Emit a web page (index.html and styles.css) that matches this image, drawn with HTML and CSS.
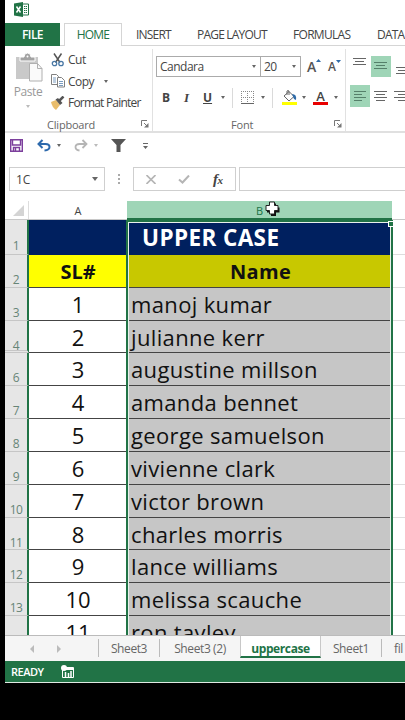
FILE: index.html
```html
<!DOCTYPE html>
<html lang="en">

<head>
    <meta charset="UTF-8">
    <meta name="viewport" content="width=device-width, initial-scale=1.0">
    <title>Excel</title>
    <link rel="stylesheet" href="styles.css">
</head>

<body>
    <div class="app">
        <div class="titlebar">
            <svg class="logo" width="15" height="15" viewBox="0 0 15 15">
                <path d="M8 2h6.500v11H8z" fill="#fff" stroke="#217346" />
                <path d="M10 4.500h3M10 6.500h3M10 8.500h3M10 10.500h3" stroke="#217346" stroke-dasharray="1.300 .5" />
                <path d="M0 1.500L9 0v15L0 13.500z" fill="#217346" />
                <path d="M2.500 4.500l4 6M6.500 4.500l-4 6" stroke="#fff" stroke-width="1.500" />
            </svg>
        </div>
        <div class="tabs">
            <div class="tab file">FILE</div>
            <div class="tab home">HOME</div>
            <div class="tab insert">INSERT</div>
            <div class="tab layout">PAGE LAYOUT</div>
            <div class="tab formulas">FORMULAS</div>
            <div class="tab data">DATA</div>
        </div>
        <div class="ribbon">
            <div class="group clipboard">
                <div class="tools">
                    <div class="paste">
                        <svg width="27" height="29" viewBox="0 0 27 29">
                            <path d="M0 4h22v22H0z" fill="#c9c9c9" />
                            <path d="M4 8V4h4q0-4 3.500-4T15 4h4v4z" fill="#a3a3a3" stroke="#fff" />
                            <circle cx="11.500" cy="3.500" r="1" fill="#fff" />
                            <path d="M13.500 10.500h8l4.500 5v12.500H13.500z" fill="#fafafa" stroke="#b0b0b0" />
                            <path d="M21.500 10.500v5H26" fill="none" stroke="#b0b0b0" />
                        </svg>
                        <span>Paste</span>
                        <i class="arrow pale"></i>
                    </div>
                    <div class="commands">
                        <div class="command">
                            <svg width="14" height="14" viewBox="0 0 14 14" fill="none">
                                <path d="M3 .5l6 9M10.500 .5l-6 9" stroke="#555" stroke-width="1.500" />
                                <circle cx="3.500" cy="10.500" r="2.200" stroke="#4a78a5" stroke-width="1.300" />
                                <circle cx="10" cy="10.500" r="2.200" stroke="#4a78a5" stroke-width="1.300" />
                            </svg>
                            <span>Cut</span>
                        </div>
                        <div class="command">
                            <svg width="14" height="14" viewBox="0 0 14 14" fill="#fff" stroke="#808080">
                                <path d="M.5 .5h5l2 2v8h-7z" />
                                <path d="M2 4h3M2 6h3M2 8h3" stroke="#7a9cc0" />
                                <path d="M6.500 3.500h4l3 3v6.500h-7z" />
                                <path d="M8 7.500h4M8 9.500h4M8 11.500h4" stroke="#7a9cc0" />
                            </svg>
                            <span>Copy</span>
                            <i class="arrow"></i>
                        </div>
                        <div class="command">
                            <svg width="14" height="14" viewBox="0 0 14 14">
                                <path d="M0 6l5-2 4 5-4 5q-4-3-5-8z" fill="#e9bd6c" />
                                <path d="M4.500 3.500L7 2l4.500 5L9 9z" fill="#555" />
                                <path d="M8 5l4.500-4.500" stroke="#555" stroke-width="2.500" />
                            </svg>
                            <span class="painter">Format Painter</span>
                        </div>
                    </div>
                </div>
                <div class="caption"><span class="cap-clip">Clipboard</span>
                    <svg width="8" height="8" viewBox="0 0 8 8" fill="none" stroke="#777">
                        <path d="M.5 6V.5H6M3 3l3 3" />
                        <path d="M7.500 3v4.500H3z" fill="#777" stroke="none" />
                    </svg>
                </div>
            </div>
            <div class="group font">
                <div class="row selects">
                    <div class="select face"><span>Candara</span><i class="arrow"></i></div>
                    <div class="select size"><span>20</span><i class="arrow"></i></div>
                    <span class="grow">A<svg width="5" height="3" viewBox="0 0 5 3"><path d="M0 3L2.500 0 5 3z" fill="#2f6ba8" /></svg></span>
                    <span class="grow shrink">A<svg width="5" height="3" viewBox="0 0 5 3"><path d="M0 0L2.500 3 5 0z" fill="#2f6ba8" /></svg></span>
                </div>
                <div class="row formats">
                    <b class="bold">B</b>
                    <i class="italic">I</i>
                    <b class="underline">U</b>
                    <i class="arrow a-under"></i>
                    <span class="divider d-one"></span>
                    <svg class="borders" width="13" height="13" viewBox="0 0 13 13" stroke="#888">
                        <path d="M0 .5h13M0 6.500h13M.5 0v13M6.500 0v13M12.500 0v13" stroke-dasharray="1 1" />
                        <path d="M0 12.500h13" stroke="#666" />
                    </svg>
                    <i class="arrow a-borders"></i>
                    <span class="divider d-two"></span>
                    <svg class="fill" width="15" height="15" viewBox="0 0 15 15">
                        <path d="M2 6l5-4.500 5 5L7 11z" fill="#fff" stroke="#666" />
                        <path d="M5 5V1q1.500-1 2 0v4" fill="none" stroke="#666" />
                        <path d="M10 4q5 0 4 6l-2-1z" fill="#2f6ba8" />
                        <path d="M0 12h15v3H0z" fill="#ffff00" />
                    </svg>
                    <i class="arrow a-fill"></i>
                    <span class="color">A</span>
                    <i class="arrow a-color"></i>
                </div>
                <div class="caption"><span class="cap-font">Font</span>
                    <svg width="8" height="8" viewBox="0 0 8 8" fill="none" stroke="#777">
                        <path d="M.5 6V.5H6M3 3l3 3" />
                        <path d="M7.500 3v4.500H3z" fill="#777" stroke="none" />
                    </svg>
                </div>
            </div>
            <div class="group align">
                <div class="row valign">
                    <svg width="20" height="21" viewBox="0 0 20 21" stroke="#666"><path d="M3 2.500h13M5 5.500h9M3 8.500h13" /></svg>
                    <svg class="on" width="20" height="21" viewBox="0 0 20 21" stroke="#55806a"><path d="M3 6.500h13M5 9.500h9M3 12.500h13" /></svg>
                    <svg width="20" height="21" viewBox="0 0 20 21" stroke="#666"><path d="M4 11.500h13M6 14.500h9M4 17.500h13" /></svg>
                </div>
                <div class="row halign">
                    <svg class="on" width="20" height="22" viewBox="0 0 20 22" stroke="#55806a"><path d="M4 6.500h12M4 9.500h8M4 12.500h12M4 15.500h8" /></svg>
                    <svg width="20" height="22" viewBox="0 0 20 22" stroke="#666"><path d="M4 6.500h13M6 9.500h9M4 12.500h13M6 15.500h9" /></svg>
                    <svg width="20" height="22" viewBox="0 0 20 22" stroke="#666"><path d="M4 6.500h13M8 9.500h9M4 12.500h13M8 15.500h9" /></svg>
                </div>
            </div>
        </div>
        <div class="quick">
            <svg class="save" width="13" height="13" viewBox="0 0 13 13" fill="none" stroke="#7c3f9c" stroke-width="1.400">
                <path d="M.7 .7h11.600v11.600H.7zM2.500 .7v5.300h8V.7M3.500 12V8.500h6V12M5.500 9v3" />
            </svg>
            <svg class="undo" width="14" height="13" viewBox="0 0 14 13" fill="none" stroke="#2d69ac" stroke-width="2">
                <path d="M5.500 1L1.500 5l4 4M2 5h6.500q4 0 4 3t-5 3.500" />
            </svg>
            <i class="arrow"></i>
            <svg class="redo" width="14" height="13" viewBox="0 0 14 13" fill="none" stroke="#b5b5b5" stroke-width="1.800">
                <path d="M8.500 1l4 4-4 4M12 5H5.500q-4 0-4 3t4 3.500" />
            </svg>
            <i class="arrow pale"></i>
            <svg class="filter" width="15" height="13" viewBox="0 0 15 13"><path d="M0 0h15L9.500 6v7h-4V6z" fill="#555" /></svg>
            <svg class="more" width="5" height="6" viewBox="0 0 5 6"><path d="M0 0h5v1H0zM0 3h5L2.500 6z" fill="#666" /></svg>
        </div>
        <div class="formula">
            <div class="box name"><span>1C</span><i class="arrow"></i></div>
            <div class="dots"><i></i><i></i><i></i></div>
            <div class="box buttons">
                <svg class="cancel" width="10" height="9" viewBox="0 0 10 9" stroke="#b5b5b5" stroke-width="1.600"><path d="M.5 0l9 9M9.500 0l-9 9" /></svg>
                <svg class="accept" width="12" height="9" viewBox="0 0 12 9" fill="none" stroke="#b5b5b5" stroke-width="2"><path d="M1 4.500l3.500 3L11 .5" /></svg>
                <span class="fx">f<small>x</small></span>
            </div>
            <div class="box input"></div>
        </div>
        <div class="sheet">
            <div class="heads">
                <div class="corner"><svg width="11" height="11" viewBox="0 0 11 11"><path d="M11 0v11H0z" fill="#d4d4d4" /></svg></div>
                <div class="head">A</div>
                <div class="head selected">B
                    <svg class="cursor" width="15" height="15" viewBox="0 0 15 15">
                        <path d="M6 2.500h5v4h3.500v5H11V15H6v-3.500H2v-5h4z" fill="#111" />
                        <path d="M4.500 1h5v3.500H13v5H9.500V13h-5V9.500H1v-5h3.500z" fill="#fff" stroke="#222" />
                    </svg>
                </div>
                <div class="head"></div>
            </div>
            <div class="grid">
                <div class="line title"><span class="num">1</span><span class="a"></span><span class="b">UPPER CASE</span><span class="c"></span></div>
                <div class="line header"><span class="num">2</span><span class="a">SL#</span><span class="b">Name</span><span class="c"></span></div>
                <div class="line"><span class="num">3</span><span class="a">1</span><span class="b">manoj kumar</span><span class="c"></span></div>
                <div class="line hidden-after"><span class="num">4</span><span class="a">2</span><span class="b">julianne kerr</span><span class="c"></span></div>
                <div class="line"><span class="num">6</span><span class="a">3</span><span class="b">augustine millson</span><span class="c"></span></div>
                <div class="line"><span class="num">7</span><span class="a">4</span><span class="b">amanda bennet</span><span class="c"></span></div>
                <div class="line"><span class="num">8</span><span class="a">5</span><span class="b">george samuelson</span><span class="c"></span></div>
                <div class="line"><span class="num">9</span><span class="a">6</span><span class="b">vivienne clark</span><span class="c"></span></div>
                <div class="line"><span class="num">10</span><span class="a">7</span><span class="b">victor brown</span><span class="c"></span></div>
                <div class="line"><span class="num">11</span><span class="a">8</span><span class="b">charles morris</span><span class="c"></span></div>
                <div class="line"><span class="num">12</span><span class="a">9</span><span class="b">lance williams</span><span class="c"></span></div>
                <div class="line"><span class="num">13</span><span class="a">10</span><span class="b">melissa scauche</span><span class="c"></span></div>
                <div class="line"><span class="num"></span><span class="a">11</span><span class="b">ron tayley</span><span class="c"></span></div>
                <div class="selection"></div>
            </div>
        </div>
        <div class="sheets">
            <div class="nav">
                <svg width="4" height="8" viewBox="0 0 4 8"><path d="M4 0v8L0 4z" fill="#bbb" /></svg>
                <svg width="4" height="8" viewBox="0 0 4 8"><path d="M0 0v8l4-4z" fill="#bbb" /></svg>
            </div>
            <div class="sheet-tab s3">Sheet3</div>
            <div class="sheet-tab s32">Sheet3 (2)</div>
            <div class="sheet-tab active">uppercase</div>
            <div class="sheet-tab s1">Sheet1</div>
            <div class="sheet-tab last">fil</div>
        </div>
        <div class="status">
            <span>READY</span>
            <svg width="13" height="13" viewBox="0 0 13 13">
                <path d="M1.500 2.500h11v10h-11z" fill="none" stroke="#fff" />
                <path d="M5 3h7v2H5z" fill="#fff" />
                <path d="M4.500 7v5M7.500 8v4M10 6v6" stroke="#fff" stroke-width="1.500" />
                <circle cx="3" cy="3" r="3" fill="#fff" />
            </svg>
        </div>
    </div>
</body>

</html>
```
FILE: styles.css
```css
* {
    box-sizing: border-box;
    padding: 0;
    margin: 0;
}

body {
    width: 405px;
    height: 720px;
    overflow: hidden;
    background-color: #000;
    color: #444;
    font: 12px "Open Sans", "Noto Sans", sans-serif;
}

svg {
    display: block;
    flex: none;
}

.app {
    width: 400px;
    height: 683px;
    margin-left: 5px;
    overflow: hidden;
    background-color: #fff;
    white-space: nowrap;
}

.titlebar {
    height: 23px;
    padding: 2px 0 0 9px;
}

.tabs {
    display: flex;
    height: 23px;
    border-bottom: 1px solid #d5d5d5;
}

.tab {
    flex: none;
    height: 22px;
    line-height: 23px;
    letter-spacing: -0.8px;
}

.file {
    width: 55px;
    height: 23px;
    background-color: #217346;
    color: #fff;
    font-weight: 600;
    letter-spacing: -0.6px;
    text-align: center;
}

.home {
    width: 58px;
    height: 23px;
    margin-left: 4px;
    border: 1px solid #d5d5d5;
    border-bottom: none;
    background-color: #fff;
    color: #217346;
    line-height: 21px;
    text-align: center;
}

.insert {
    width: 61px;
    margin-left: 14px;
}

.layout {
    width: 96px;
}

.formulas {
    width: 84px;
    letter-spacing: -0.7px;
}

/* 功能区 ribbon */
.ribbon {
    display: flex;
    height: 87px;
    border-bottom: 2px solid #e0e0e0;
}

.group {
    display: flex;
    flex-direction: column;
    flex: none;
    height: 82px;
    margin-top: 3px;
    border-right: 1px solid #e1e1e1;
}

.arrow {
    display: block;
    flex: none;
    width: 0;
    height: 0;
    border: 2.5px solid transparent;
    border-top: 3px solid #666;
    border-bottom: none;
}

.pale {
    border-top-color: #bbb;
}

.clipboard {
    width: 148px;
}

.tools {
    display: flex;
    height: 68px;
}

.paste {
    display: flex;
    flex-direction: column;
    align-items: center;
    width: 46px;
    padding-top: 4px;
    color: #999;
}

.paste svg {
    margin-left: 3px;
}

.paste span {
    line-height: 16px;
    margin: 2px 0 5px;
    letter-spacing: -0.4px;
}

.commands {
    display: flex;
    flex-direction: column;
}

.command {
    display: flex;
    align-items: center;
    height: 21.5px;
}

.command span {
    margin-left: 3px;
    letter-spacing: -0.5px;
}

.command .painter {
    letter-spacing: -0.8px;
}

.command .arrow {
    margin-left: 10px;
}

.caption {
    display: flex;
    align-items: center;
    justify-content: space-between;
    height: 14px;
    padding-right: 3px;
    color: #666;
    font-size: 11px;
    letter-spacing: -0.2px;
}

.cap-clip {
    margin-left: 42px;
}

.font {
    width: 193px;
}

.row {
    display: flex;
    align-items: center;
    flex: none;
}

.selects {
    height: 35px;
    padding-left: 3px;
}

.select {
    display: flex;
    align-items: center;
    justify-content: space-between;
    height: 21px;
    border: 1px solid #ababab;
    padding: 0 4px 0 3px;
    letter-spacing: -0.5px;
}

.face {
    width: 105px;
}

.size {
    width: 40px;
    border-left: none;
}

.grow {
    display: flex;
    width: 13px;
    margin-left: 6px;
    color: #555;
    font-size: 14px;
    font-weight: 600;
}

.grow svg {
    margin-top: 2px;
}

.shrink {
    margin-left: 8px;
    font-size: 12px;
}

.formats {
    height: 33px;
    padding: 0 0 6px 9px;
}

.bold {
    width: 8px;
    font-size: 12px;
}

.italic {
    width: 8px;
    margin-left: 14px;
    font: italic bold 13px "Liberation Serif", serif;
}

.underline {
    width: 8px;
    margin-left: 11px;
    text-decoration: underline;
}

.a-under {
    margin-left: 10px;
}

.divider {
    width: 1px;
    height: 20px;
    background-color: #dadada;
}

.d-one {
    margin-left: 7px;
}

.borders {
    margin-left: 8px;
}

.a-borders {
    margin-left: 7px;
}

.d-two {
    margin-left: 7px;
}

.fill {
    margin-left: 9px;
}

.a-fill {
    margin-left: 5px;
}

.color {
    width: 15px;
    height: 15px;
    margin-left: 7px;
    border-bottom: 3px solid #e80000;
    font-size: 13px;
    font-weight: 600;
    line-height: 12px;
    text-align: center;
}

.a-color {
    margin-left: 6px;
}

.cap-font {
    margin-left: 78px;
}

.align {
    width: 62px;
    border: none;
}

.valign {
    height: 35px;
    padding-left: 4px;
    gap: 1px;
}

.halign {
    height: 24px;
    padding-left: 4px;
}

.on {
    background-color: #9fd5b7;
}

/* 快速访问工具栏 */
.quick {
    display: flex;
    align-items: center;
    height: 34px;
    padding: 0 0 9px 5px;
}

.undo {
    margin-left: 14px;
}

.quick .arrow {
    margin-left: 6px;
}

.redo {
    margin-left: 13px;
}

.filter {
    margin-left: 13px;
}

.more {
    margin-left: 17px;
}

.formula {
    display: flex;
    height: 34px;
    padding-left: 4px;
}

.box {
    display: flex;
    align-items: center;
    flex: none;
    height: 24px;
    border: 1px solid #cfcfcf;
}

.name {
    width: 96px;
    justify-content: space-between;
    padding: 0 6px;
}

.name .arrow {
    border-width: 4px 3px 0;
}

.dots {
    display: flex;
    flex: none;
    flex-direction: column;
    align-items: center;
    justify-content: center;
    gap: 2px;
    width: 28px;
    height: 24px;
}

.dots i {
    width: 2px;
    height: 2px;
    background-color: #aaa;
}

.buttons {
    width: 103px;
}

.cancel {
    margin-left: 12px;
}

.accept {
    margin-left: 22px;
}

.fx {
    margin-left: 23px;
    font: italic bold 15px "Liberation Serif", serif;
    letter-spacing: -0.5px;
}

.fx small {
    font-size: 11px;
}

.input {
    width: 170px;
    margin-left: 3px;
}

/* 工作表 */
.sheet {
    height: 434px;
    overflow: hidden;
}

.heads,
.line {
    display: grid;
    grid-template-columns: 24px 98px 265px 13px;
    grid-template-rows: 100%;
}

.heads {
    height: 19px;
    border-bottom: 1px solid #c8c8c8;
}

.corner {
    display: flex;
    align-items: flex-end;
    justify-content: flex-end;
    padding: 0 4px 3px 0;
    border-right: 1px solid #ddd;
}

.head {
    line-height: 19px;
    font-size: 11px;
    text-align: center;
}

.selected {
    position: relative;
    height: 19px;
    background-color: #9fd5b7;
    border-bottom: 2px solid #217346;
    color: #217346;
}

.cursor {
    position: absolute;
    left: 138px;
    top: 0;
}

.grid {
    position: relative;
}

.line {
    height: 32.83px;
    color: #111;
    font-size: 22px;
    line-height: 33px;
}

.num {
    padding-top: 14px;
    background-color: #e6e6e6;
    border-right: 2px solid #217346;
    border-bottom: 1px solid #c6c6c6;
    color: #668577;
    font-size: 12px;
    font-weight: normal;
    line-height: 22px;
    text-align: center;
    letter-spacing: -0.5px;
}

.a {
    border-bottom: 1px solid #444;
    text-align: center;
}

.b {
    padding-left: 4px;
    background-color: #c6c6c6;
    border-bottom: 1px solid #444;
    letter-spacing: 0.35px;
}

.c {
    border-bottom: 1px solid #ddd;
}

.hidden-after .num {
    border-bottom: 3px double #c6c6c6;
}

.title {
    height: 35px;
    font-weight: bold;
    line-height: 36px;
}

.title .num {
    padding-top: 15px;
}

.title .a,
.title .b {
    border-bottom: none;
    background-color: #00205f;
    color: #fff;
}

.title .b {
    padding-left: 15px;
    font-size: 22.5px;
    letter-spacing: 0.4px;
}

.header .a,
.header .b {
    font-size: 20px;
    font-weight: bold;
}

.header .a {
    background-color: #ffff00;
}

.header .b {
    padding: 0 0 0 2px;
    background-color: #c8c800;
    text-align: center;
}

.selection {
    position: absolute;
    left: 121px;
    top: 0;
    width: 267px;
    height: 430px;
    border: 2px solid #217346;
    box-shadow: inset 0 0 0 1px #e8f0eb;
}

.selection::after {
    content: "";
    box-sizing: border-box;
    position: absolute;
    right: -3px;
    top: -1px;
    width: 6px;
    height: 6px;
    border: 1px solid #fff;
    background-color: #217346;
}

/* 底部标签 */
.sheets {
    display: flex;
    height: 26px;
    background-color: #f5f5f5;
    border-top: 1px solid #bbb;
    color: #666;
    line-height: 25px;
    letter-spacing: -0.4px;
}

.nav {
    display: flex;
    align-items: center;
    flex: none;
    gap: 23px;
    width: 93px;
    padding-left: 25px;
}

.sheet-tab {
    flex: none;
    text-align: center;
}

.s3,
.s32 {
    height: 18px;
    margin-top: 3px;
    border-left: 1px solid #bbb;
    line-height: 19px;
}

.s3 {
    width: 61px;
}

.s32 {
    width: 81px;
}

.active {
    width: 81px;
    height: 22px;
    background-color: #fff;
    border: 1px solid #c8c8c8;
    border-top: none;
    border-bottom: 2px solid #217346;
    color: #217346;
    font-weight: bold;
}

.s1 {
    width: 61px;
    height: 18px;
    margin-top: 3px;
    border-right: 1px solid #bbb;
    line-height: 19px;
}

.last {
    margin-left: 12px;
}

.status {
    display: flex;
    align-items: center;
    height: 22px;
    padding: 0 0 1px 6px;
    background-color: #217346;
    border-bottom: 1px solid #dfe9e3;
    color: #fff;
    font-size: 11px;
    font-weight: 600;
    letter-spacing: -0.5px;
}

.status svg {
    margin-left: 17px;
}
```
